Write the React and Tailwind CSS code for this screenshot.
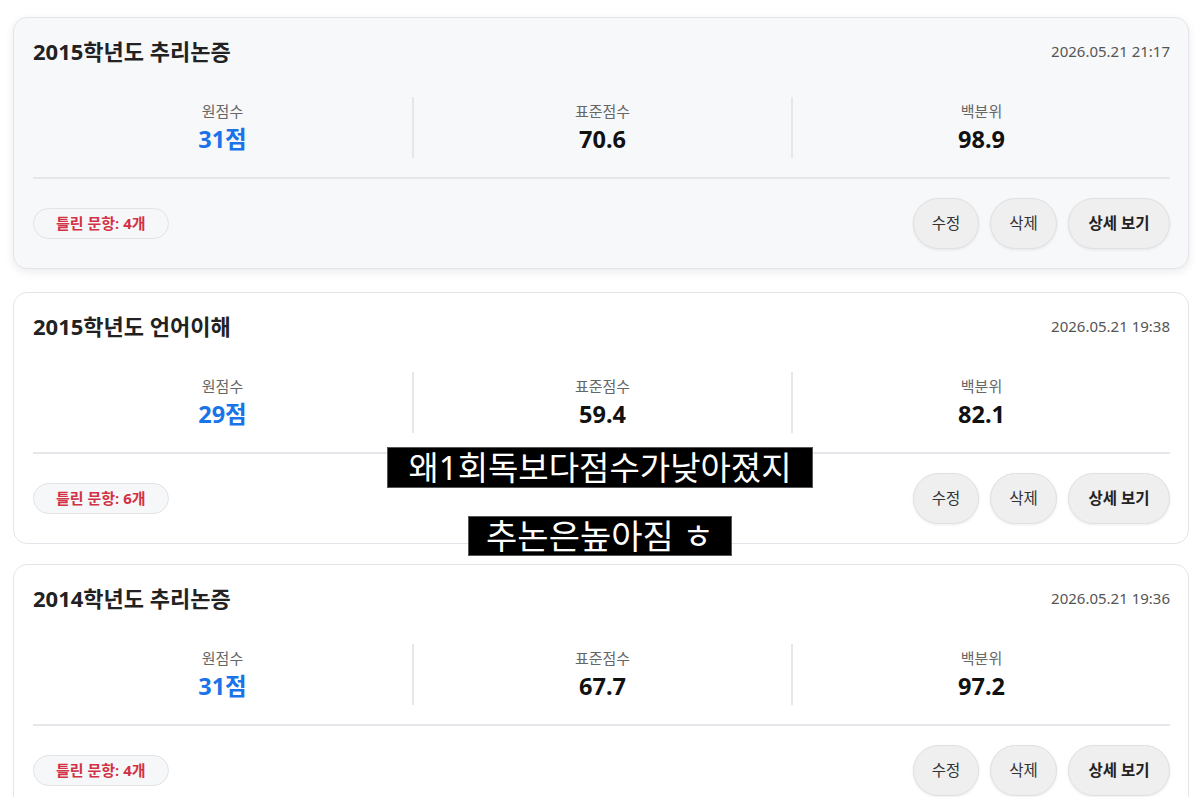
import React from "react";

const records = [
  { title: "2015학년도 추리논증", date: "2026.05.21 21:17", raw: "31점", std: "70.6", pct: "98.9", wrong: "4개", active: true },
  { title: "2015학년도 언어이해", date: "2026.05.21 19:38", raw: "29점", std: "59.4", pct: "82.1", wrong: "6개" },
  { title: "2014학년도 추리논증", date: "2026.05.21 19:36", raw: "31점", std: "67.7", pct: "97.2", wrong: "4개" },
];

function Stat({ label, value, blue, divider }) {
  return (
    <div className={"flex flex-col items-center justify-center h-[61px] " + (divider ? "border-l-2 border-[#e6e7ea]" : "")}>
      <div className="text-[15px] leading-[20px] text-[#666]">{label}</div>
      <div className={"text-[23.5px] leading-[30px] font-bold mt-[3px] " + (blue ? "text-[#1a73e8]" : "text-[#111]")}>{value}</div>
    </div>
  );
}

function Card({ r }) {
  return (
    <div
      className={
        "rounded-[14px] border pl-[19px] pr-[18px] pt-[19px] pb-[19px] " +
        (r.active
          ? "bg-[#f7f8fa] border-[#e3e5e8] shadow-[0_3px_10px_rgba(0,0,0,0.08)] -translate-y-[3px]"
          : "bg-white border-[#e3e5ea]")
      }
    >
      <div className="flex items-center justify-between h-[28px]">
        <div className="text-[22px] font-bold text-[#222]">{r.title}</div>
        <div className="text-[15px] text-[#555]">{r.date}</div>
      </div>
      <div className="grid grid-cols-3 mt-[32px]">
        <Stat label="원점수" value={r.raw} blue />
        <Stat label="표준점수" value={r.std} divider />
        <Stat label="백분위" value={r.pct} divider />
      </div>
      <div className="h-[2px] bg-[#e6e7ea] mt-[19px]" />
      <div className="flex items-center justify-between mt-[19px] h-[51px]">
        <div className="h-[31px] px-[22px] flex items-center rounded-full border border-[#e2e3e6] bg-[#f6f7f9] text-[15px] font-semibold text-[#d23245]">
          틀린 문항:&nbsp;<span className="font-bold">{r.wrong}</span>
        </div>
        <div className="flex gap-[11px]">
          <button className="h-[51px] w-[66px] rounded-full bg-[#efefef] border border-[#e0e0e0] shadow-[0_1px_3px_rgba(0,0,0,0.08)] text-[15.5px] text-[#333]">수정</button>
          <button className="h-[51px] w-[67px] rounded-full bg-[#efefef] border border-[#e0e0e0] shadow-[0_1px_3px_rgba(0,0,0,0.08)] text-[15.5px] text-[#333]">삭제</button>
          <button className="h-[51px] w-[102px] rounded-full bg-[#efefef] border border-[#e0e0e0] shadow-[0_1px_3px_rgba(0,0,0,0.08)] text-[15.5px] font-bold text-[#222]">상세 보기</button>
        </div>
      </div>
    </div>
  );
}

export default function App() {
  return (
    <div
      className="relative w-[1200px] h-[797px] overflow-hidden bg-white"
      style={{ fontFamily: '"Noto Sans", "Noto Sans CJK KR", sans-serif' }}
    >
      <div className="flex flex-col gap-[20px] pl-[13px] pr-[11px] pt-[20px]">
        {records.map((r, i) => (
          <Card key={i} r={r} />
        ))}
      </div>
      <div className="absolute left-[387px] top-[447px] w-[426px] h-[41px] bg-black border border-[#555] flex items-center justify-center text-white text-[33px] leading-none">
        왜1회독보다점수가낮아졌지
      </div>
      <div className="absolute left-[468px] top-[516px] w-[264px] h-[40px] bg-black border border-[#555] flex items-center justify-center text-white text-[34px] leading-none">
        추논은높아짐 ㅎ
      </div>
    </div>
  );
}
